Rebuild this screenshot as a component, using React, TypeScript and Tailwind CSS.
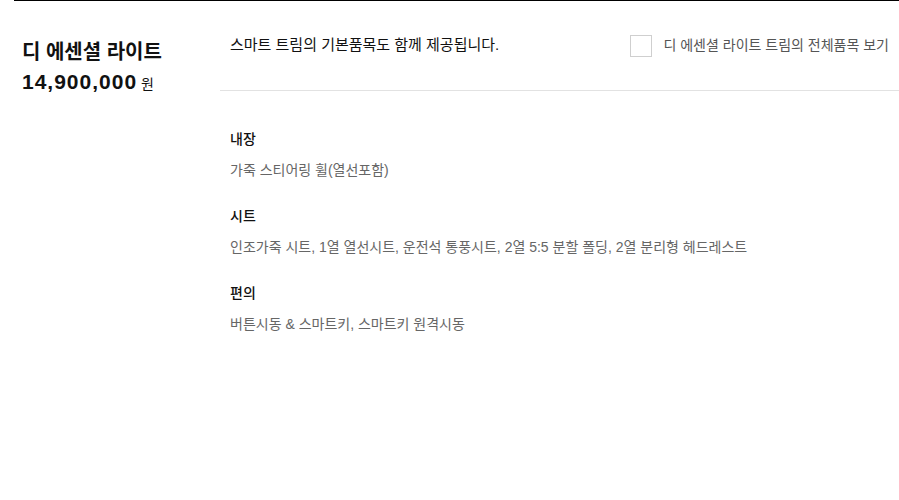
const font = { fontFamily: '"Liberation Sans", "Noto Sans CJK KR", sans-serif' };

const sections = [
  { title: "내장", items: "가죽 스티어링 휠(열선포함)" },
  { title: "시트", items: "인조가죽 시트, 1열 열선시트, 운전석 통풍시트, 2열 5:5 분할 폴딩, 2열 분리형 헤드레스트" },
  { title: "편의", items: "버튼시동 & 스마트키, 스마트키 원격시동" },
];

export default function App() {
  return (
    <div className="w-[899px] h-[500px] bg-white" style={font}>
      <div className="ml-[14px] border-t border-black flex">
        <div className="w-[206px] pl-2 pt-[37px] text-[#111]">
          <p className="text-[20px] font-bold leading-[29px]">디 에센셜 라이트</p>
          <p className="leading-[29px]">
            <span className="text-[21px] font-bold tracking-[1px]">14,900,000</span>
            <span className="text-[14px] ml-1">원</span>
          </p>
        </div>
        <div className="flex-1">
          <div className="h-[90px] border-b border-[#e2e2e2] flex items-center justify-between pl-[10px] pr-[10px]">
            <p className="text-[15px] text-[#111]">스마트 트림의 기본품목도 함께 제공됩니다.</p>
            <label className="flex items-center gap-[11px] text-[14px] text-[#555]">
              <span className="w-[22px] h-[22px] border border-[#cfcfcf] bg-white" />
              디 에센셜 라이트 트림의 전체품목 보기
            </label>
          </div>
          <div className="pt-[38px] pl-[10px] flex flex-col gap-[26px]">
            {sections.map((s) => (
              <div key={s.title} className="flex flex-col gap-[11px]">
                <p className="text-[14px] leading-[20px] font-medium text-[#111]">{s.title}</p>
                <p className="text-[14px] leading-[20px] text-[#666]">{s.items}</p>
              </div>
            ))}
          </div>
        </div>
      </div>
    </div>
  );
}
